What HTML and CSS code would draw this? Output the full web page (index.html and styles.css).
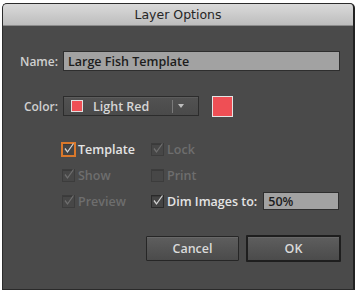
FILE: index.html
```html
<!DOCTYPE html>
<html>
<head>
  <meta charset="UTF-8">
  <title>Layer Options</title>
  <link rel="stylesheet" href="styles.css">
</head>
<body>
  <div class="dialog">
    <div class="titlebar">Layer Options</div>

    <div class="content">
      <div class="field-row">
        <label class="field-label" for="layerName">Name:</label>
        <input class="text-input name-input" id="layerName" type="text" value="Large Fish Template">
      </div>

      <div class="field-row color-row">
        <label class="field-label">Color:</label>
        <div class="select">
          <span class="chip"></span>
          <span class="select-text">Light Red</span>
          <span class="select-divider"></span>
          <span class="select-arrow"></span>
        </div>
        <span class="swatch"></span>
      </div>

      <div class="options">
        <div class="option focused">
          <span class="check"><svg viewBox="0 0 13 13"><path d="M3 6.5 L5.5 10 L11.5 1.5"/></svg></span>
          <span class="option-text">Template</span>
        </div>
        <div class="option disabled">
          <span class="check"><svg viewBox="0 0 13 13"><path d="M3 6.5 L5.5 10 L11.5 1.5"/></svg></span>
          <span class="option-text">Lock</span>
        </div>
        <div class="option disabled">
          <span class="check"><svg viewBox="0 0 13 13"><path d="M3 6.5 L5.5 10 L11.5 1.5"/></svg></span>
          <span class="option-text">Show</span>
        </div>
        <div class="option disabled">
          <span class="check"></span>
          <span class="option-text">Print</span>
        </div>
        <div class="option disabled">
          <span class="check"><svg viewBox="0 0 13 13"><path d="M3 6.5 L5.5 10 L11.5 1.5"/></svg></span>
          <span class="option-text">Preview</span>
        </div>
        <div class="option">
          <span class="check"><svg viewBox="0 0 13 13"><path d="M3 6.5 L5.5 10 L11.5 1.5"/></svg></span>
          <span class="option-text">Dim Images to:</span>
          <input class="text-input dim-input" type="text" value="50%">
        </div>
      </div>

      <div class="buttons">
        <button class="btn">Cancel</button>
        <button class="btn btn-default">OK</button>
      </div>
    </div>
  </div>
</body>
</html>
```

FILE: styles.css
```css
body {
  margin: 0;
  background: #fff;
  font-family: 'Open Sans', 'Liberation Sans', sans-serif;
  font-size: 12px;
}

.dialog {
  width: 350px;
  height: 285px;
  margin: 3px 0 0 2px;
  background: #4a4a4a;
  border: 1px solid #2c2c2c;
  border-right: 2px solid #222;
  border-bottom: 1px solid #2a2a2a;
  border-radius: 5px 5px 0 0;
  overflow: hidden;
}

.titlebar {
  height: 21px;
  line-height: 21px;
  text-align: center;
  font-family: 'DejaVu Sans', sans-serif;
  font-size: 12.5px;
  color: #262626;
  background: linear-gradient(#dadada, #bdbdbd);
  border-bottom: 1px solid #8c8c8c;
}

.content {
  padding: 25px 13px 0 0;
}

.field-row {
  display: flex;
  align-items: center;
  height: 20px;
}

.color-row {
  margin-top: 25px;
}

.field-label {
  width: 55px;
  margin-right: 5px;
  text-align: right;
  font-weight: 600;
  color: #d0d0d0;
}

.text-input {
  box-sizing: border-box;
  height: 20px;
  padding: 0 4px;
  border: 1px solid #2e2e2e;
  background: #a2a2a2;
  font-family: 'Open Sans', 'Liberation Sans', sans-serif;
  font-size: 12.5px;
  font-weight: 600;
  color: #1c1c1c;
  outline: none;
}

.name-input {
  width: 277px;
}

.select {
  box-sizing: border-box;
  display: flex;
  align-items: center;
  width: 136px;
  height: 20px;
  padding-left: 7px;
  border: 1px solid #2c2c2c;
  background: linear-gradient(#525252, #4a4a4a);
  box-shadow: inset 0 1px 0 #5c5c5c;
}

.chip {
  width: 10px;
  height: 10px;
  border: 1px solid #e0e0e0;
  background: #ef4f55;
}

.select-text {
  margin-left: 10px;
  width: 79px;
  font-size: 12.5px;
  font-weight: 600;
  color: #d6d6d6;
}

.select-divider {
  width: 1px;
  height: 13px;
  background: #7a7a7a;
}

.select-arrow {
  margin-left: 5px;
  border-left: 3.5px solid transparent;
  border-right: 3.5px solid transparent;
  border-top: 4px solid #bdbdbd;
}

.swatch {
  box-sizing: border-box;
  width: 21px;
  height: 21px;
  margin-left: 13px;
  border: 1px solid #e4e4e4;
  background: #ef4f55;
}

.options {
  display: grid;
  grid-template-columns: 89px 1fr;
  row-gap: 6px;
  margin: 23px 0 0 59px;
}

.option {
  display: flex;
  align-items: center;
  height: 20px;
  white-space: nowrap;
}

.check {
  box-sizing: border-box;
  flex: none;
  width: 13px;
  height: 13px;
  margin-right: 3px;
  border: 1px solid #2a2a2a;
  background: #444;
  box-shadow: inset 0 1px 0 #3a3a3a;
}

.check svg {
  display: block;
  width: 13px;
  height: 13px;
  margin: -2px 0 0 -1px;
  overflow: visible;
}

.check path {
  fill: none;
  stroke: #d0d0d0;
  stroke-width: 1.3;
}

.option.focused .check {
  outline: 1px solid #d9782b;
  border-color: #d9782b;
}

.option-text {
  font-size: 12.5px;
  font-weight: 600;
  color: #e4e4e4;
}

.option.disabled .option-text {
  color: #6e6e6e;
}

.option.disabled .check {
  border-color: #3c3c3c;
  background: #474747;
}

.option.disabled .check path {
  stroke: #6e6e6e;
}

.dim-input {
  width: 76px;
  height: 18px;
  margin-left: 6px;
}

.buttons {
  display: flex;
  justify-content: flex-end;
  gap: 7px;
  margin-top: 25px;
}

.btn {
  box-sizing: border-box;
  width: 93px;
  height: 25px;
  border: 1px solid #262626;
  border-radius: 1px;
  background: linear-gradient(#5e5e5e, #4b4b4b);
  box-shadow: inset 0 1px 0 #686868;
  font-family: 'Open Sans', 'Liberation Sans', sans-serif;
  font-size: 12.5px;
  font-weight: 600;
  color: #dadada;
}

.btn-default {
  width: 95px;
  height: 27px;
  margin: -1px -1px 0 0;
  border: 2px solid #1e1e1e;
}
```
